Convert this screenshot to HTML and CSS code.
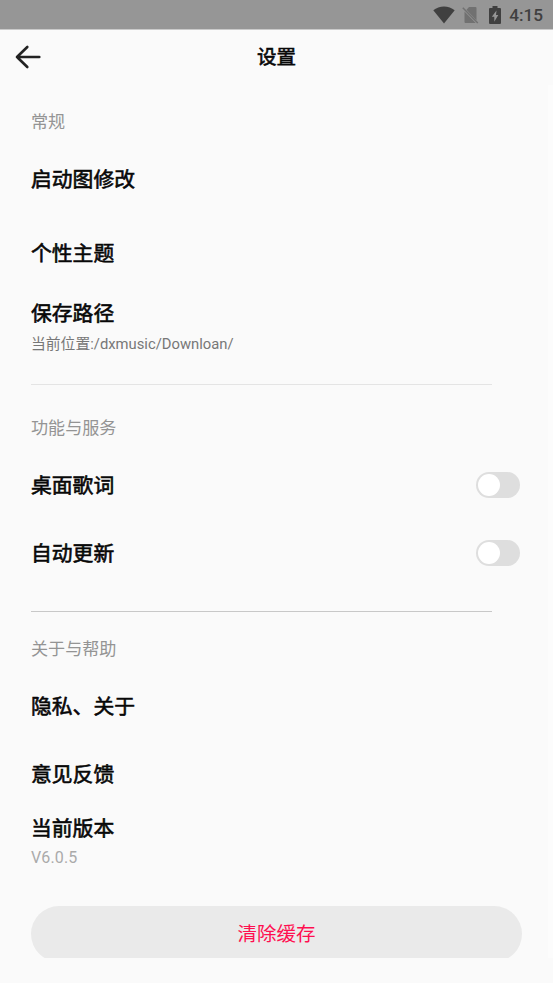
FILE: index.html
```html
<!DOCTYPE html>
<html lang="zh-CN">
<head>
<meta charset="utf-8">
<title>设置</title>
<link rel="stylesheet" href="styles.css">
</head>
<body>
<div class="status">
  <svg class="wifi" width="22" height="18" viewBox="0 0 22 18"><path d="M.3 4.200C3.300 1.700 7 .4 11 .4s7.700 1.300 10.700 3.800L11 17.600z" fill="#404040"/></svg>
  <svg class="sim" width="17" height="18" viewBox="0 0 17 18"><path d="M7 1h6.500q1 0 1 1v12.500L4.500 3.700zM2.500 5.500l11.200 11.500H3.500q-1 0-1-1z" fill="#717171"/><path d="M.8 1.700l15 15.300" stroke="#717171" stroke-width="1.500"/></svg>
  <svg class="battery" width="12" height="18" viewBox="0 0 12 18"><path d="M3.500 0h5v2H11q1 0 1 1v14q0 1-1 1H1q-1 0-1-1V3q0-1 1-1h2.500z" fill="#404040"/><path d="M7.500 4.500L2.800 10.800h2.500v5L9.300 9H7z" fill="#969696"/></svg>
  <span class="time">4:15</span>
</div>
<header class="header">
  <svg class="back" width="26" height="24" viewBox="0 0 26 24"><path d="M12.300 2L2 12l10.300 10M2 12h22.300" fill="none" stroke="#222" stroke-width="2.600" stroke-linecap="round" stroke-linejoin="round"/></svg>
  <h1 class="title">设置</h1>
</header>
<main class="content">
  <section class="group general">
    <h2 class="label">常规</h2>
    <div class="row first">启动图修改</div>
    <div class="row theme">个性主题</div>
    <div class="detail path"><div class="name">保存路径</div><div class="value">当前位置:/dxmusic/Downloan/</div></div>
  </section>
  <section class="group features">
    <h2 class="label">功能与服务</h2>
    <div class="row">桌面歌词<span class="switch"></span></div>
    <div class="row">自动更新<span class="switch"></span></div>
  </section>
  <section class="group about">
    <h2 class="label">关于与帮助</h2>
    <div class="row">隐私、关于</div>
    <div class="row">意见反馈</div>
    <div class="detail version"><div class="name">当前版本</div><div class="value">V6.0.5</div></div>
  </section>
  <button class="clear">清除缓存</button>
</main>
</body>
</html>
```
FILE: styles.css
```css
* { box-sizing: border-box; }
body {
  margin: 0;
  height: 983px;
  overflow: hidden;
  background: #fafafa;
  color: #080808;
  font-family: Roboto, "Noto Sans CJK SC", sans-serif;
}
.status {
  height: 30px;
  padding: 0 10px 0 0;
  display: flex;
  align-items: center;
  justify-content: flex-end;
  background: #969696;
  border-bottom: 1px solid #cacaca;
}
.wifi { margin-right: 7px; }
.sim { margin-right: 10px; }
.battery { margin-right: 8px; }
.time {
  width: 34px;
  text-align: right;
  font-size: 17.200px;
  font-weight: 500;
  line-height: 20px;
  color: #404040;
  padding-top: 1px;
}
.header {
  height: 55px;
  padding: 0 15px;
  display: grid;
  grid-template-columns: 26px 1fr 26px;
  align-items: center;
}
.back { margin-bottom: 1px; }
.title {
  margin: 0;
  padding-top: 1px;
  text-align: center;
  font-size: 19.500px;
  font-weight: 400;
  line-height: 28px;
  -webkit-text-stroke: .6px #080808;
}
.content {
  height: 873px;
  overflow: hidden;
  padding: 0 26px 0 31px;
  border-right: 5px solid #fcfcfc;
}
.group { position: relative; }
.general { height: 300px; padding-top: 25px; }
.features { height: 227px; padding-top: 31px; }
.about { height: 294px; padding-top: 25px; }
.general::after, .features::after {
  content: "";
  position: absolute;
  left: 0;
  right: 30.500px;
  bottom: 0;
  height: 1px;
  background: #e4e4e4;
}
.features::after { background: #c8c8c8; }
.label {
  margin: 0 0 12px;
  font-size: 17.100px;
  font-weight: 400;
  line-height: 24px;
  color: #949494;
}
.row, .name {
  font-size: 20.800px;
  line-height: 30px;
  -webkit-text-stroke: .6px #080808;
}
.row {
  height: 68px;
  display: flex;
  align-items: center;
  justify-content: space-between;
}
.general .label { margin: 0; }
.first { height: 92px; }
.theme { height: 56px; }
.path { padding-top: 17px; }
.path .value { font-size: 14.800px; line-height: 31px; color: #777; }
.version { padding-top: 5px; }
.version .value { font-size: 16px; line-height: 28px; color: #aaa; letter-spacing: .15px; }
.switch {
  width: 44.500px;
  height: 26px;
  margin: 0 2px 2px 0;
  padding: 2px;
  border-radius: 13px;
  background: #dedede;
}
.switch::before {
  content: "";
  display: block;
  width: 22px;
  height: 22px;
  border-radius: 50%;
  background: #fff;
}
.clear {
  display: block;
  width: 100%;
  height: 56px;
  padding: 2px 0 0;
  border: 0;
  border-radius: 28px;
  background: #eaeaea;
  color: #ff0f50;
  font: 19.500px/54px Roboto, "Noto Sans CJK SC", sans-serif;
}
```
